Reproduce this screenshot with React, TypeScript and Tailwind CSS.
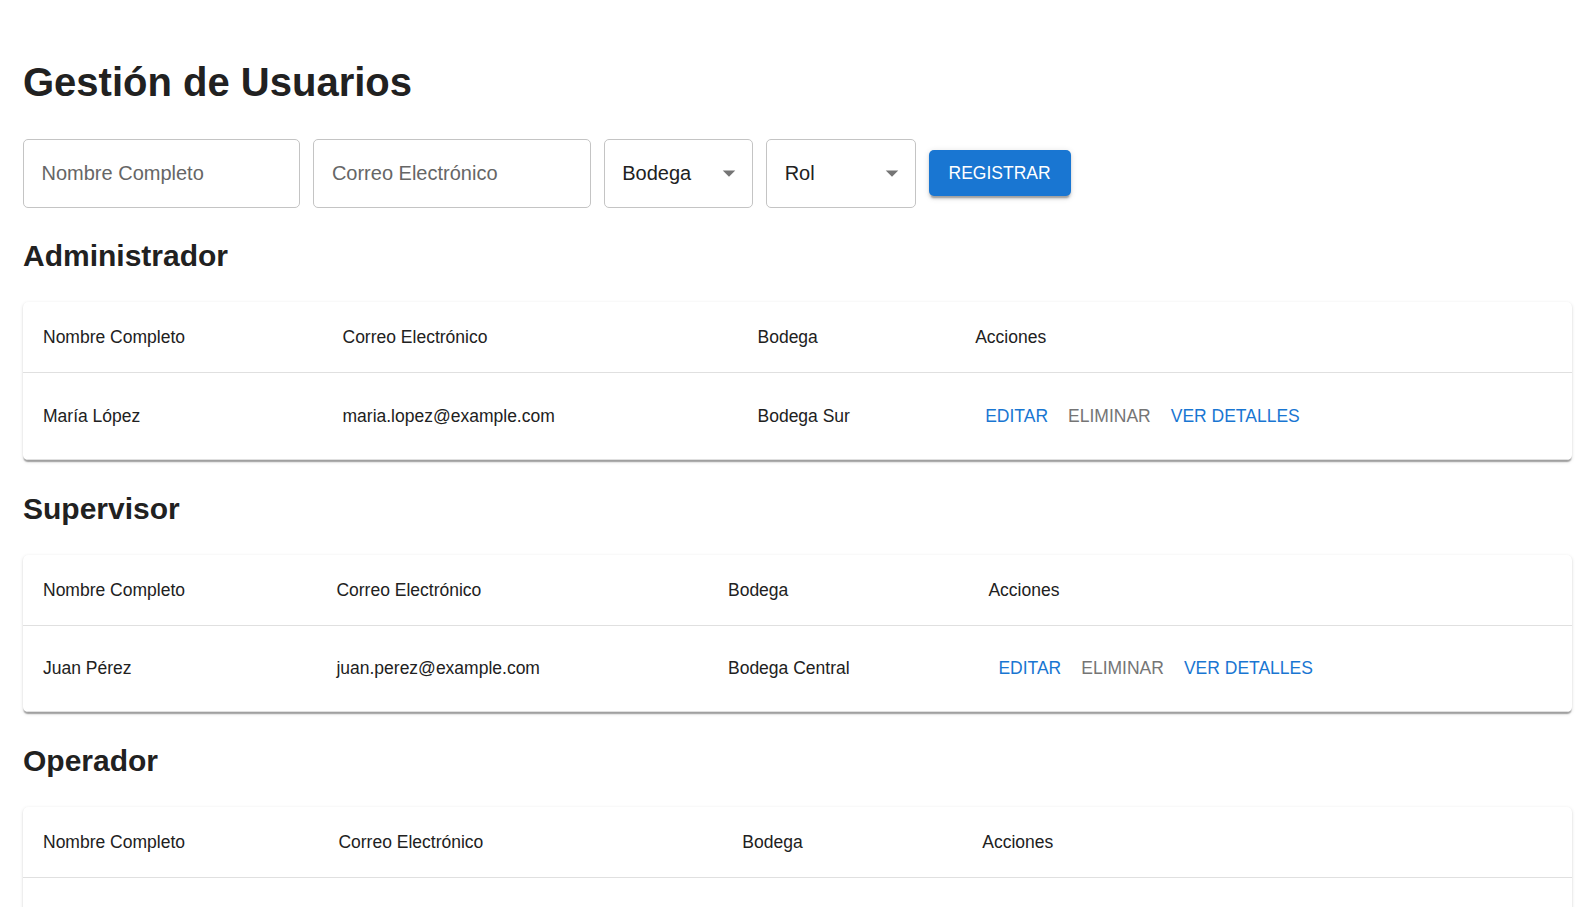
import React from "react";

interface Usuario {
  nombre: string;
  correo: string;
  bodega: string;
}

interface Seccion {
  rol: string;
  cols: string[];
  usuarios: Usuario[];
}

const secciones: Seccion[] = [
  {
    rol: "Administrador",
    cols: ["w-[299.5px]", "w-[415px]", "w-[217.7px]"],
    usuarios: [{ nombre: "María López", correo: "maria.lopez@example.com", bodega: "Bodega Sur" }],
  },
  {
    rol: "Supervisor",
    cols: ["w-[293.4px]", "w-[391.6px]", "w-[260.4px]"],
    usuarios: [{ nombre: "Juan Pérez", correo: "juan.perez@example.com", bodega: "Bodega Central" }],
  },
  {
    rol: "Operador",
    cols: ["w-[295.4px]", "w-[403.9px]", "w-[240px]"],
    usuarios: [{ nombre: "Carlos Gómez", correo: "carlos.gomez@example.com", bodega: "Bodega Norte" }],
  },
];

function Flecha() {
  return (
    <svg viewBox="0 0 24 24" className="w-[30px] h-[30px] fill-[#757575] shrink-0">
      <path d="M7 10l5 5 5-5z" />
    </svg>
  );
}

function TablaUsuarios({ seccion }: { seccion: Seccion }) {
  return (
    <div className="bg-white rounded-[5px] overflow-hidden shadow-[0_2.5px_1.25px_-1.25px_rgba(0,0,0,0.2),0_1.25px_1.25px_0_rgba(0,0,0,0.14),0_1.25px_3.75px_0_rgba(0,0,0,0.12)]">
      <table className="w-full table-fixed border-collapse text-left text-[17.5px] text-[#212121]">
        <colgroup>
          {seccion.cols.map((c, i) => (
            <col key={i} className={c} />
          ))}
          <col />
        </colgroup>
        <thead>
          <tr className="border-b border-[#e0e0e0]">
            <th className="px-[20px] py-[20px] leading-[30px] font-normal">Nombre Completo</th>
            <th className="px-[20px] py-[20px] leading-[30px] font-normal">Correo Electrónico</th>
            <th className="px-[20px] py-[20px] leading-[30px] font-normal">Bodega</th>
            <th className="px-[20px] py-[20px] leading-[30px] font-normal">Acciones</th>
          </tr>
        </thead>
        <tbody>
          {seccion.usuarios.map((u) => (
            <tr key={u.correo} className="border-b border-[#e0e0e0]">
              <td className="px-[20px] py-[20px] leading-[30px]">{u.nombre}</td>
              <td className="px-[20px] py-[20px] leading-[30px]">{u.correo}</td>
              <td className="px-[20px] py-[20px] leading-[30px]">{u.bodega}</td>
              <td className="px-[20px] py-[20px]">
                <div className="flex items-center">
                  <button type="button" className="min-w-[80px] px-[10px] h-[45.6px] leading-[30.6px] uppercase text-[#1976d2] rounded-[5px]">Editar</button>
                  <button type="button" className="min-w-[80px] px-[10px] h-[45.6px] leading-[30.6px] uppercase text-[#757575] rounded-[5px]">Eliminar</button>
                  <button type="button" className="min-w-[80px] px-[10px] h-[45.6px] leading-[30.6px] uppercase text-[#1976d2] rounded-[5px]">Ver Detalles</button>
                </div>
              </td>
            </tr>
          ))}
        </tbody>
      </table>
    </div>
  );
}

export default function App() {
  return (
    <div className="min-h-screen bg-white font-['Liberation_Sans',Arial,sans-serif] px-[23px] pt-[58px] pb-[40px]">
      <h1 className="text-[40px] leading-[48px] font-bold text-[#212121]">Gestión de Usuarios</h1>

      {/* FORMULARIO */}
      <div className="mt-[32.5px] flex items-center gap-[13px]">
        <div className="w-[277.4px] h-[69.3px] border border-[#c4c4c4] rounded-[5px] flex items-center px-[17.5px]">
          <span className="text-[20px] text-[#666666]">Nombre Completo</span>
        </div>
        <div className="w-[277.4px] h-[69.3px] border border-[#c4c4c4] rounded-[5px] flex items-center px-[17.5px]">
          <span className="text-[20px] text-[#666666]">Correo Electrónico</span>
        </div>
        <div className="w-[149.4px] h-[69.3px] border border-[#c4c4c4] rounded-[5px] flex items-center justify-between pl-[17.5px] pr-[8px]">
          <span className="text-[20px] text-[#212121]">Bodega</span>
          <Flecha />
        </div>
        <div className="w-[149.4px] h-[69.3px] border border-[#c4c4c4] rounded-[5px] flex items-center justify-between pl-[17.5px] pr-[8px]">
          <span className="text-[20px] text-[#212121]">Rol</span>
          <Flecha />
        </div>
        <button type="button" className="h-[45.6px] px-[20px] rounded-[5px] bg-[#1976d2] text-white text-[17.5px] uppercase shadow-[0_3.75px_1.25px_-2.5px_rgba(0,0,0,0.2),0_2.5px_2.5px_0_rgba(0,0,0,0.14),0_1.25px_6.25px_0_rgba(0,0,0,0.12)]">
          Registrar
        </button>
      </div>

      {/* SECCIONES POR ROL */}
      {secciones.map((s) => (
        <section key={s.rol} className="mt-[28.6px]">
          <h2 className="text-[30px] leading-[40px] font-bold text-[#212121]">{s.rol}</h2>
          <div className="mt-[26px]">
            <TablaUsuarios seccion={s} />
          </div>
        </section>
      ))}
    </div>
  );
}
